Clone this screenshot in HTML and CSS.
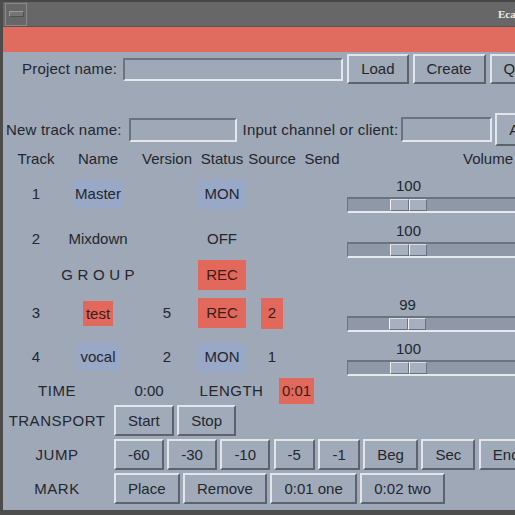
FILE: index.html
```html
<!DOCTYPE html>
<html>
<head>
<meta charset="utf-8">
<link rel="stylesheet" href="styles.css">
</head>
<body>
<div class="win">
  <div class="titlebar">
    <div class="wm-btn"><span class="wm-bar"></span></div>
    <span class="title">Ecasound</span>
  </div>
  <div class="banner"></div>

  <div class="row project">
    <span class="lbl lbl-project">Project name:</span>
    <span class="entry entry-project"></span>
    <button class="btn">Load</button>
    <button class="btn">Create</button>
    <button class="btn">Quit</button>
  </div>

  <div class="row newtrack">
    <span class="lbl">New track name:</span>
    <span class="entry entry-name"></span>
    <span class="lbl lbl-input">Input channel or client:</span>
    <span class="entry entry-input"></span>
    <button class="btn btn-add">Add</button>
  </div>

  <div class="tracks">
    <div class="trow thead">
      <div class="c">Track</div>
      <div class="c">Name</div>
      <div class="c">Version</div>
      <div class="c">Status</div>
      <div class="c">Source</div>
      <div class="c">Send</div>
      <div class="c vol">Volume</div>
    </div>

    <div class="trow r1">
      <div class="c">1</div>
      <div class="c"><span class="tag blue">Master</span></div>
      <div class="c"></div>
      <div class="c"><span class="tag status blue">MON</span></div>
      <div class="c"></div>
      <div class="c"></div>
      <div class="c vol">
        <div class="scale">
          <div class="scale-val" style="margin-left:43px">100</div>
          <div class="trough"><div class="thumb" style="margin-left:42px"><i></i><i></i></div></div>
        </div>
      </div>
    </div>

    <div class="trow r2">
      <div class="c">2</div>
      <div class="c">Mixdown</div>
      <div class="c"></div>
      <div class="c">OFF</div>
      <div class="c"></div>
      <div class="c"></div>
      <div class="c vol">
        <div class="scale">
          <div class="scale-val" style="margin-left:43px">100</div>
          <div class="trough"><div class="thumb" style="margin-left:42px"><i></i><i></i></div></div>
        </div>
      </div>
    </div>

    <div class="trow rgroup">
      <div class="c"></div>
      <div class="c group">G R O U P</div>
      <div class="c"></div>
      <div class="c"><span class="tag status rec red">REC</span></div>
      <div class="c"></div>
      <div class="c"></div>
      <div class="c vol"></div>
    </div>

    <div class="trow r3">
      <div class="c">3</div>
      <div class="c"><span class="tag tag-test red">test</span></div>
      <div class="c">5</div>
      <div class="c"><span class="tag status rec red">REC</span></div>
      <div class="c"><span class="tag tag-src red">2</span></div>
      <div class="c"></div>
      <div class="c vol">
        <div class="scale">
          <div class="scale-val" style="margin-left:42px">99</div>
          <div class="trough"><div class="thumb" style="margin-left:41px"><i></i><i></i></div></div>
        </div>
      </div>
    </div>

    <div class="trow r4">
      <div class="c">4</div>
      <div class="c"><span class="tag tag-vocal blue">vocal</span></div>
      <div class="c">2</div>
      <div class="c"><span class="tag status blue">MON</span></div>
      <div class="c">1</div>
      <div class="c"></div>
      <div class="c vol">
        <div class="scale">
          <div class="scale-val" style="margin-left:43px">100</div>
          <div class="trough"><div class="thumb" style="margin-left:42px"><i></i><i></i></div></div>
        </div>
      </div>
    </div>
  </div>

  <div class="row timerow">
    <span class="side">TIME</span>
    <span class="tcell tcell-time">0:00</span>
    <span class="tcell tcell-len">LENGTH</span>
    <span class="tag tag-len red">0:01</span>
  </div>

  <div class="controls">
    <div class="row crow">
      <span class="side">TRANSPORT</span>
      <button class="btn">Start</button>
      <button class="btn">Stop</button>
    </div>
    <div class="row crow">
      <span class="side">JUMP</span>
      <button class="btn">-60</button>
      <button class="btn">-30</button>
      <button class="btn">-10</button>
      <button class="btn">-5</button>
      <button class="btn">-1</button>
      <button class="btn">Beg</button>
      <button class="btn">Sec</button>
      <button class="btn">End</button>
    </div>
    <div class="row crow">
      <span class="side">MARK</span>
      <button class="btn">Place</button>
      <button class="btn">Remove</button>
      <button class="btn">0:01 one</button>
      <button class="btn">0:02 two</button>
    </div>
  </div>
</div>
</body>
</html>
```

FILE: styles.css
```css
html, body {
  margin: 0;
  padding: 0;
}

body {
  width: 515px;
  height: 515px;
  overflow: hidden;
  background: #9ea8b7;
  font-family: "Liberation Sans", Arial, sans-serif;
  font-size: 15px;
  color: #23272e;
}

.win {
  box-sizing: border-box;
  height: 515px;
  display: flex;
  flex-direction: column;
  border-left: 3px solid #4c4c4c;
  border-bottom: 5px solid #4e4e4e;
  overflow: hidden;
}

/* window manager title bar */
.titlebar {
  box-sizing: border-box;
  height: 27px;
  flex-shrink: 0;
  display: flex;
  align-items: center;
  background: #676767;
  border-top: 2px solid #474747;
  border-bottom: 1px solid #555555;
  white-space: nowrap;
}

.wm-btn {
  box-sizing: border-box;
  width: 22px;
  height: 23px;
  margin-left: 2px;
  flex-shrink: 0;
  border: 1px solid #8a8a8a;
  display: flex;
  align-items: center;
  justify-content: center;
}

.wm-bar {
  box-sizing: border-box;
  width: 15px;
  height: 6px;
  background: #757575;
  border-top: 1px solid #9a9a9a;
  border-left: 1px solid #9a9a9a;
  border-bottom: 1px solid #505050;
  border-right: 1px solid #505050;
}

.title {
  margin-left: 471px;
  flex-shrink: 0;
  color: #ececec;
  font-family: "Liberation Serif", "Times New Roman", serif;
  font-weight: bold;
  font-size: 11px;
}

.banner {
  height: 25px;
  flex-shrink: 0;
  background: #e06b5f;
}

/* generic rows */
.row {
  display: flex;
  align-items: center;
  white-space: nowrap;
  flex-shrink: 0;
}

.row > * {
  flex-shrink: 0;
}

.lbl {
  line-height: 18px;
  letter-spacing: 0.2px;
}

.entry {
  display: block;
  box-sizing: border-box;
  height: 24px;
  border-top: 2px solid #6b7381;
  border-left: 2px solid #6b7381;
  border-bottom: 2px solid #e4e8ee;
  border-right: 2px solid #e4e8ee;
  background: #9ea8b7;
}

.btn {
  box-sizing: border-box;
  height: 31px;
  margin: 0;
  padding: 0 12px;
  font: inherit;
  color: #23272e;
  background: #a0aab9;
  border-top: 2px solid #e2e6ec;
  border-left: 2px solid #e2e6ec;
  border-bottom: 2px solid #5c636e;
  border-right: 2px solid #5c636e;
  border-radius: 0;
  line-height: 18px;
}

/* project row */
.project {
  height: 30px;
  margin-top: 2px;
  padding-left: 19px;
  gap: 4px;
}

.project .btn {
  height: 30px;
}

.lbl-project {
  margin-right: 2px;
}

.entry-project {
  width: 220px;
  height: 23px;
}

/* new track row */
.newtrack {
  height: 33px;
  margin-top: 29px;
  padding-left: 3px;
}

.entry-name {
  width: 108px;
  margin-left: 7px;
}

.lbl-input {
  margin-left: 6px;
}

.entry-input {
  width: 91px;
  height: 25px;
  margin-left: 3px;
}

.btn-add {
  height: 33px;
  margin-left: 3px;
}

/* tracks table */
.tracks {
  display: flex;
  flex-direction: column;
  flex-shrink: 0;
  margin-top: 4px;
}

.trow {
  display: grid;
  grid-template-columns: 66px 58px 80px 30px 70px 30px 292px;
  align-items: center;
  white-space: nowrap;
}

.c {
  display: flex;
  justify-content: center;
  align-items: center;
  min-width: 0;
  line-height: 18px;
}

.c > * {
  flex-shrink: 0;
}

.c.vol {
  box-sizing: border-box;
  padding-left: 10px;
  justify-content: flex-start;
}

.thead .c.vol {
  justify-content: center;
}

.thead { height: 18px; }
.r1 { height: 52px; }
.r2 { height: 36px; }
.rgroup { height: 38px; }
.r3 { height: 38px; }
.r4 { height: 50px; }

.tag {
  display: block;
  line-height: 18px;
  padding: 5px 2px;
}

.blue {
  background: #98a8c6;
}

.red {
  background: #e2685b;
  color: #3a1c1b;
}

.status {
  box-sizing: border-box;
  width: 48px;
  text-align: center;
  padding: 5px 0 6px;
}

.status.rec {
  padding: 6px 0;
}

.tag-test {
  padding: 4px 3px 3px;
}

.tag-vocal {
  padding: 5px 3px;
}

.tag-src {
  padding: 6px 7px 7px;
}

.group {
  letter-spacing: 0.2px;
}

/* volume scale */
.scale {
  display: flex;
  flex-direction: column;
  align-items: flex-start;
  padding-top: 4px;
}

.scale-val {
  width: 37px;
  text-align: center;
  line-height: 14px;
  height: 14px;
  margin-bottom: 4px;
}

.trough {
  box-sizing: border-box;
  width: 282px;
  height: 16px;
  background: #8e98a7;
  border-top: 2px solid #6b7381;
  border-left: 1px solid #6b7381;
  border-bottom: 2px solid #e6eaef;
  border-right: 1px solid #e6eaef;
}

.thumb {
  width: 37px;
  height: 12px;
  display: flex;
}

.thumb i {
  flex: 1;
  box-sizing: border-box;
  background: #a6b0be;
  border-top: 1px solid #d7dce3;
  border-left: 1px solid #f0f2f5;
  border-bottom: 1px solid #6a7280;
  border-right: 1px solid #6a7280;
}

/* time row */
.timerow {
  height: 18px;
}

.side {
  width: 108px;
  text-align: center;
  line-height: 18px;
  letter-spacing: 0.5px;
}

.tcell {
  text-align: center;
  line-height: 18px;
}

.tcell-time {
  width: 70px;
  margin-left: 3px;
}

.tcell-len {
  width: 95px;
  letter-spacing: 0.5px;
}

.tag-len {
  line-height: 18px;
  padding: 4px 3px;
}

/* control rows */
.controls {
  display: flex;
  flex-direction: column;
  gap: 3px;
  margin-top: 5px;
  flex-shrink: 0;
}

.crow {
  height: 31px;
  gap: 3.5px;
}

.crow .side {
  margin-right: -0.5px;
}
```
